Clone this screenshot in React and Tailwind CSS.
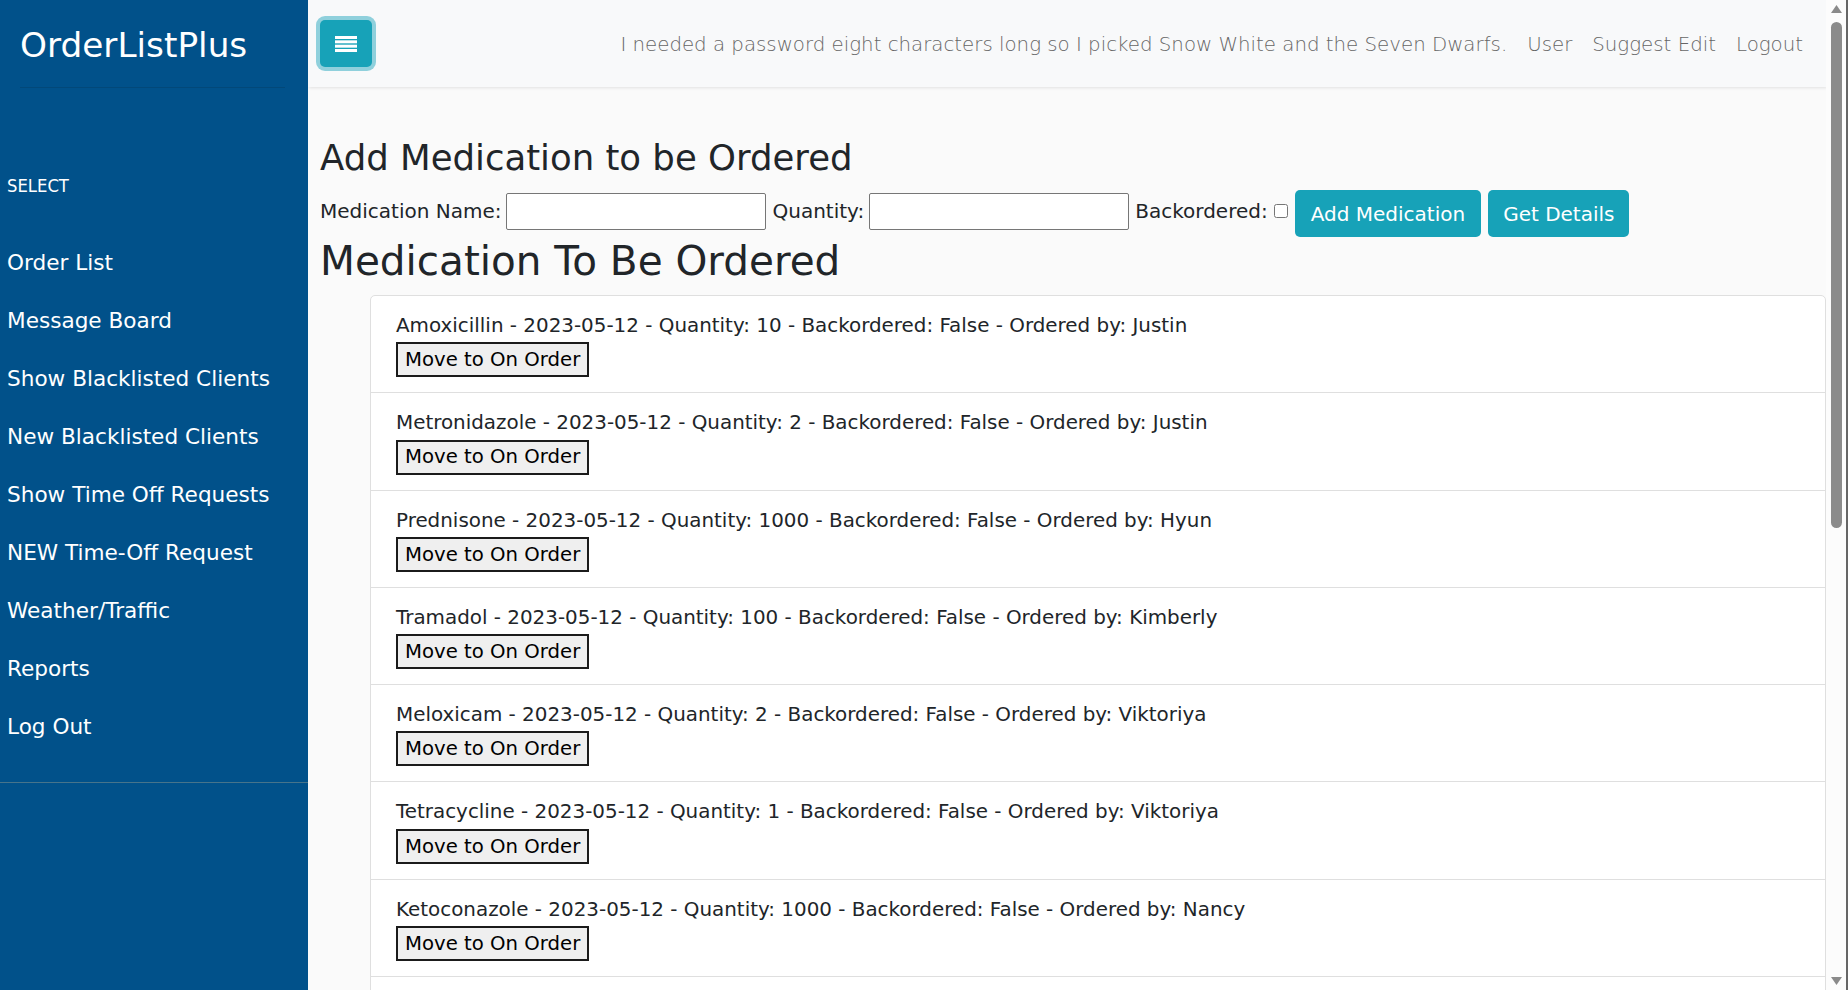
import React from "react";

const sideLinks = [
  "Order List",
  "Message Board",
  "Show Blacklisted Clients",
  "New Blacklisted Clients",
  "Show Time Off Requests",
  "NEW Time-Off Request",
  "Weather/Traffic",
  "Reports",
  "Log Out",
];

const orders = [
  { name: "Amoxicillin", qty: 10, by: "Justin" },
  { name: "Metronidazole", qty: 2, by: "Justin" },
  { name: "Prednisone", qty: 1000, by: "Hyun" },
  { name: "Tramadol", qty: 100, by: "Kimberly" },
  { name: "Meloxicam", qty: 2, by: "Viktoriya" },
  { name: "Tetracycline", qty: 1, by: "Viktoriya" },
  { name: "Ketoconazole", qty: 1000, by: "Nancy" },
];

const Sidebar = () => (
  <aside className="w-[308px] shrink-0 bg-[#01518a] text-white flex flex-col">
    <div className="pt-[24px] px-[20px]">
      <h3 className="text-[34.3px] leading-[42px] font-normal">OrderListPlus</h3>
      <div className="mt-[21px] h-px w-[265px] bg-[#024879]" />
    </div>
    {/* menu */}
    <p className="mt-[83px] pl-[7px] leading-[30px] text-[18.3px] font-['DejaVu_Sans_Condensed','DejaVu_Sans',sans-serif]">
      SELECT
    </p>
    <ul className="mt-[33px]">
      {sideLinks.map((l) => (
        <li key={l} className="h-[58px] flex items-center pl-[7px] text-[21.6px]">
          <a href="#">{l}</a>
        </li>
      ))}
    </ul>
    <div className="mt-[26px] h-px w-full bg-[#47748b]" />
  </aside>
);

const Navbar = () => (
  <nav className="h-[87px] bg-[#f8f9fa] shadow-[1px_1px_3px_rgba(0,0,0,0.1)] flex items-center pl-[12px] pr-[23px] relative z-10">
    <button className="w-[52px] h-[47px] rounded-[5px] bg-[#17a2b8] ring-4 ring-[#8fd0dc] flex items-center justify-center">
      <svg width="22" height="16" viewBox="0 0 22 16" fill="#fff">
        <rect x="0" y="0" width="22" height="3" />
        <rect x="0" y="4.33" width="22" height="3" />
        <rect x="0" y="8.67" width="22" height="3" />
        <rect x="0" y="13" width="22" height="3" />
      </svg>
    </button>
    <div className="ml-auto mt-[2px] flex gap-[20px] text-[19.8px] font-light text-[#666666]">
      <span>I needed a password eight characters long so I picked Snow White and the Seven Dwarfs.</span>
      <a href="#">User</a>
      <a href="#">Suggest Edit</a>
      <a href="#">Logout</a>
    </div>
  </nav>
);

const Scrollbar = () => (
  <div className="w-[20px] shrink-0 bg-[#fcfcfc] flex flex-col items-center">
    <svg className="mt-[5px]" width="11" height="8" viewBox="0 0 11 8">
      <polygon points="5.5,0 11,8 0,8" fill="#8a8a8a" />
    </svg>
    <div className="mt-[9px] w-[11px] h-[506px] rounded-full bg-[#8b8b8b]" />
    <div className="flex-1" />
    <svg className="mb-[5px]" width="11" height="8" viewBox="0 0 11 8">
      <polygon points="0,0 11,0 5.5,8" fill="#8a8a8a" />
    </svg>
  </div>
);

export default function App() {
  return (
    <div className="flex h-screen w-full overflow-hidden bg-[#fafafa] font-['DejaVu_Sans',sans-serif]">
      <Sidebar />
      <main className="flex-1 min-w-0 overflow-hidden">
        <Navbar />
        <div className="pl-[12px] pt-[50px] text-[#212529]">
          <h3 className="text-[35.5px] leading-[42px] font-normal">Add Medication to be Ordered</h3>
          <form className="mt-[11px] h-[47px] flex items-center text-[20px]" onSubmit={(e) => e.preventDefault()}>
            <label className="mb-[5px]">Medication Name:</label>
            <input type="text" className="mb-[5px] ml-[5px] w-[260px] h-[37px] border border-[#767676] rounded-[2px] bg-white" />
            <label className="mb-[5px] ml-[6px]">Quantity:</label>
            <input type="text" className="mb-[5px] ml-[5px] w-[260px] h-[37px] border border-[#767676] rounded-[2px] bg-white" />
            <label className="mb-[5px] ml-[6px]">Backordered:</label>
            <input type="checkbox" className="ml-[6px] w-[14px] h-[14px] -mt-[6px]" />
            <button className="ml-[7px] h-[47px] px-[16px] rounded-[5px] bg-[#17a2b8] text-white">Add Medication</button>
            <button className="ml-[7px] h-[47px] px-[15px] rounded-[5px] bg-[#17a2b8] text-white">Get Details</button>
          </form>
          <h2 className="text-[40.5px] leading-[48px] font-normal">Medication To Be Ordered</h2>
          <ul className="mt-[10px] ml-[50px] bg-white border border-[#dfdfdf] rounded-t-[5px]">
            {orders.map((o) => (
              <li key={o.name} className="px-[25px] py-[15px] border-b border-[#dfdfdf]">
                <div className="text-[19.9px] leading-[30px]">
                  {o.name} - 2023-05-12 - Quantity: {o.qty} - Backordered: False - Ordered by: {o.by}
                </div>
                <button className="mt-[1.3px] h-[35px] px-[7px] text-[19.7px] bg-[#efefef] border-2 border-[#1b1b1b] text-black">
                  Move to On Order
                </button>
              </li>
            ))}
            <li className="h-[40px]" />
          </ul>
        </div>
      </main>
      <Scrollbar />
      <div className="w-[2px] shrink-0 bg-[#666]" />
    </div>
  );
}
